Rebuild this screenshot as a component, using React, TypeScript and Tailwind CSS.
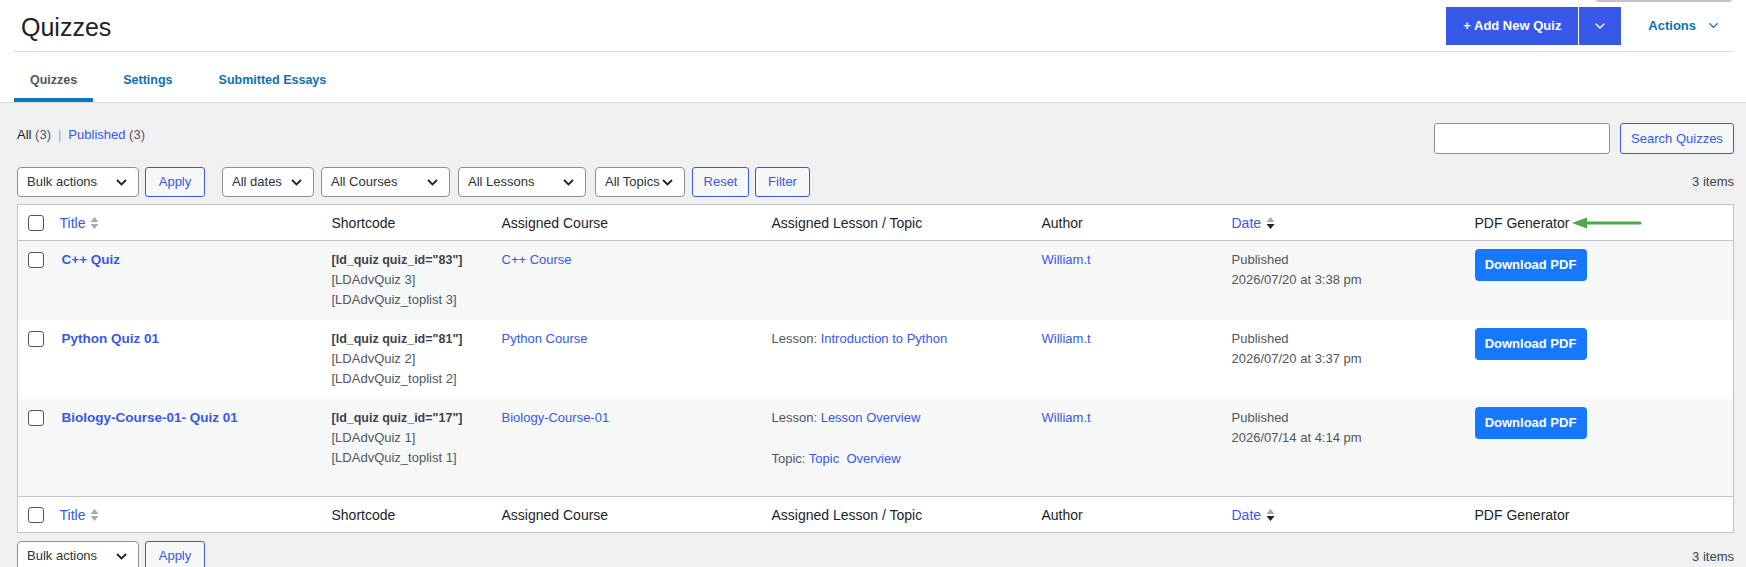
import { ChevronDown } from 'lucide-react'

const rows = [
  {
    title: 'C++ Quiz',
    id: '83',
    num: '3',
    course: 'C++ Course',
    lesson: null as null | string,
    topic: null as null | string,
    date: '2026/07/20 at 3:38 pm',
  },
  {
    title: 'Python Quiz 01',
    id: '81',
    num: '2',
    course: 'Python Course',
    lesson: 'Introduction to Python',
    topic: null,
    date: '2026/07/20 at 3:37 pm',
  },
  {
    title: 'Biology-Course-01- Quiz 01',
    id: '17',
    num: '1',
    course: 'Biology-Course-01',
    lesson: 'Lesson Overview',
    topic: 'Topic\u00a0 Overview',
    date: '2026/07/14 at 4:14 pm',
  },
]

function Chevron() {
  return (
    <svg width="11" height="7" viewBox="0 0 11 7" fill="none" className="shrink-0">
      <path d="M1 1l4.5 4.5L10 1" stroke="#1d2327" strokeWidth="1.8" />
    </svg>
  )
}

function Select({ label, className }: { label: string; className: string }) {
  return (
    <div
      className={`flex h-[30px] items-center justify-between whitespace-nowrap rounded-[4px] border border-[#8c8f94] bg-white pl-[9px] pr-[11px] text-[13px] text-[#2c3338] ${className}`}
    >
      <span>{label}</span>
      <Chevron />
    </div>
  )
}

function OutlineButton({ label, className }: { label: string; className: string }) {
  return (
    <button
      className={`flex h-[30px] items-center justify-center rounded-[3px] border border-[#3858e9] bg-[#f6f7f7] text-[13px] text-[#3858e9] ${className}`}
    >
      {label}
    </button>
  )
}

function Checkbox() {
  return <div className="h-[16px] w-[16px] rounded-[3px] border border-[#50575e] bg-white" />
}

function SortArrows({ active }: { active?: boolean }) {
  return (
    <svg width="9" height="14" viewBox="0 0 9 14" className="ml-[5px] inline-block align-[-2px]">
      <path d="M4.5 1L8.5 6H0.5z" fill="#a7aaad" />
      <path d="M4.5 13L8.5 8H0.5z" fill={active ? '#1d2327' : '#a7aaad'} />
    </svg>
  )
}

function HeadRow({ top }: { top?: boolean }) {
  const th = 'px-[10px] pt-[8px] pb-[7px] text-left text-[14px] font-normal leading-[20px] text-[#1d2327]'
  return (
    <tr className={top ? 'border-b border-[#c3c4c7]' : 'border-t border-[#c3c4c7]'}>
      <th className="pl-[10px] align-middle">
        <Checkbox />
      </th>
      <th className={th}>
        <span className="text-[#3858e9]">Title</span>
        <SortArrows />
      </th>
      <th className={th}>Shortcode</th>
      <th className={th}>Assigned Course</th>
      <th className={th}>Assigned Lesson / Topic</th>
      <th className={th}>Author</th>
      <th className={th}>
        <span className="text-[#3858e9]">Date</span>
        <SortArrows active />
      </th>
      <th className={th}>
        <span className="inline-flex items-center">
          PDF Generator
          {top && (
            <svg width="70" height="12" viewBox="0 0 70 12" className="ml-[3px]">
              <path d="M0 6L15 0.5V11.5z" fill="#4caa4a" />
              <path d="M14 6H68" stroke="#4caa4a" strokeWidth="3" strokeLinecap="round" />
            </svg>
          )}
        </span>
      </th>
    </tr>
  )
}

export default function App() {
  const td = 'px-[10px] pt-[9px] pb-[10px] align-top leading-[20px]'
  return (
    <div className="min-h-screen bg-[#f0f0f1] font-['Liberation_Sans',Arial,sans-serif] text-[13px] text-[#3c434a]">
      {/* header */}
      <header className="relative border-b border-[#dcdcde] bg-white pl-[14px] pr-[12px]">
        <div className="absolute right-[14px] top-0 h-[2px] w-[136px] rounded-b-[2px] bg-[#c3c4c7]" />
        <div className="flex h-[52px] items-center justify-between border-b border-[#dcdcde]">
          <h1 className="mt-[4px] pl-[7px] text-[25px] leading-none text-[#1d2327]">Quizzes</h1>
          <div className="flex items-center">
            <button className="flex h-[38px] w-[132px] items-center justify-center bg-[#3858e9] text-[13px] font-bold text-white">
              + Add New Quiz
            </button>
            <button className="ml-px flex h-[38px] w-[42px] items-center justify-center bg-[#3858e9] text-white">
              <ChevronDown size={16} strokeWidth={2} />
            </button>
            <button className="ml-[27px] flex items-center gap-[10px] pr-[13px] text-[13px] font-bold text-[#0a72b5]">
              Actions
              <ChevronDown size={15} strokeWidth={2.2} />
            </button>
          </div>
        </div>
        <nav className="flex h-[50px] items-end gap-[14px] text-[12.5px] font-bold">
          <a className="border-b-4 border-[#0a78be] px-[16px] pb-[8px] text-[#50575e]">Quizzes</a>
          <a className="border-b-4 border-transparent px-[16px] pb-[8px] text-[#0a72b5]">Settings</a>
          <a className="border-b-4 border-transparent px-[16px] pb-[8px] text-[#0a72b5]">Submitted Essays</a>
        </nav>
      </header>

      <main className="pl-[17px] pr-[12px] pb-[20px]">
        <div className="flex items-start justify-between pt-[20px]">
          <div className="mt-[2px] leading-[20px]">
            <span className="text-[#1d2327]">All</span> <span className="text-[#50575e]">(3)</span>
            <span className="mx-[7px] text-[#a7aaad]">|</span>
            <span className="text-[#3858e9]">Published</span> <span className="text-[#50575e]">(3)</span>
          </div>
          <div className="flex items-center gap-[10px]">
            <div className="h-[31px] w-[176px] rounded-[3px] border border-[#8c8f94] bg-white" />
            <OutlineButton label="Search Quizzes" className="h-[31px] w-[114px]" />
          </div>
        </div>

        <div className="mt-[13px] flex items-center justify-between">
          <div className="flex items-center">
            <Select label="Bulk actions" className="w-[122px]" />
            <OutlineButton label="Apply" className="ml-[6px] w-[60px]" />
            <Select label="All dates" className="ml-[17px] w-[92px]" />
            <Select label="All Courses" className="ml-[7px] w-[129px]" />
            <Select label="All Lessons" className="ml-[8px] w-[128px]" />
            <Select label="All Topics" className="ml-[9px] w-[90px]" />
            <OutlineButton label="Reset" className="ml-[7px] w-[57px]" />
            <OutlineButton label="Filter" className="ml-[6px] w-[55px]" />
          </div>
          <span className="text-[#3c434a]">3 items</span>
        </div>

        <table className="mt-[7px] w-full table-fixed border-collapse border border-[#c3c4c7] bg-white">
          <colgroup>
            <col className="w-[32px]" />
            <col className="w-[272px]" />
            <col className="w-[170px]" />
            <col className="w-[270px]" />
            <col className="w-[270px]" />
            <col className="w-[190px]" />
            <col className="w-[243px]" />
            <col />
          </colgroup>
          <thead>
            <HeadRow top />
          </thead>
          <tbody>
            {rows.map((r, i) => (
              <tr key={r.id} className={i % 2 === 0 ? 'bg-[#f6f7f7]' : 'bg-white'}>
                <td className="pl-[10px] pt-[11px] align-top">
                  <Checkbox />
                </td>
                <td className={td}>
                  <span className="pl-[2px] text-[13.5px] font-bold text-[#3858e9]">{r.title}</span>
                </td>
                <td className={td}>
                  <div className="text-[12.5px] font-bold text-[#3c434a]">[ld_quiz quiz_id="{r.id}"]</div>
                  <div className="text-[#50575e]">[LDAdvQuiz {r.num}]</div>
                  <div className="text-[#50575e]">[LDAdvQuiz_toplist {r.num}]</div>
                </td>
                <td className={td}>
                  <span className="text-[#3858e9]">{r.course}</span>
                </td>
                <td className={td}>
                  {r.lesson && (
                    <div className="text-[#50575e]">
                      Lesson: <span className="text-[#3858e9]">{r.lesson}</span>
                    </div>
                  )}
                  {r.topic && (
                    <div className="mb-[17px] mt-[21px] text-[#50575e]">
                      Topic: <span className="text-[#3858e9]">{r.topic}</span>
                    </div>
                  )}
                </td>
                <td className={td}>
                  <span className="text-[#3858e9]">William.t</span>
                </td>
                <td className={`${td} text-[#50575e]`}>
                  <div>Published</div>
                  <div>{r.date}</div>
                </td>
                <td className="px-[10px] pt-[8px] align-top">
                  <button className="h-[32px] w-[112px] rounded-[4px] bg-[#1677ff] text-[13px] font-bold text-white">
                    Download PDF
                  </button>
                </td>
              </tr>
            ))}
          </tbody>
          <tfoot>
            <HeadRow />
          </tfoot>
        </table>

        <div className="mt-[8px] flex items-start justify-between">
          <div className="flex items-center">
            <Select label="Bulk actions" className="w-[122px]" />
            <OutlineButton label="Apply" className="ml-[6px] w-[60px]" />
          </div>
          <span className="mt-[6px] text-[#3c434a]">3 items</span>
        </div>
      </main>
    </div>
  )
}
